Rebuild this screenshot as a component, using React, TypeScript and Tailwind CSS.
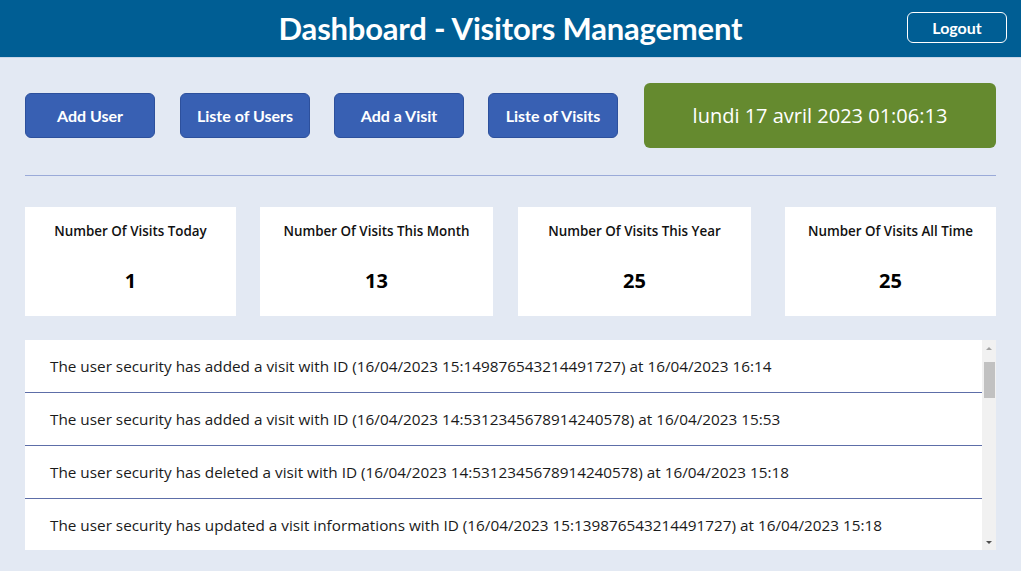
import React from 'react'

const actions = ['Add User', 'Liste of Users', 'Add a Visit', 'Liste of Visits']

const stats = [
  { label: 'Number Of Visits Today', value: 1, w: 'w-[211px]', ml: '' },
  { label: 'Number Of Visits This Month', value: 13, w: 'w-[233px]', ml: 'ml-[24px]' },
  { label: 'Number Of Visits This Year', value: 25, w: 'w-[233px]', ml: 'ml-[25px]' },
  { label: 'Number Of Visits All Time', value: 25, w: 'w-[211px]', ml: 'ml-[34px]' },
]

const logs = [
  'The user security has added a visit with ID (16/04/2023 15:149876543214491727) at 16/04/2023 16:14',
  'The user security has added a visit with ID (16/04/2023 14:5312345678914240578) at 16/04/2023 15:53',
  'The user security has deleted a visit with ID (16/04/2023 14:5312345678914240578) at 16/04/2023 15:18',
  'The user security has updated a visit informations with ID (16/04/2023 15:139876543214491727) at 16/04/2023 15:18',
]

export default function App() {
  return (
    <div className="w-[1021px] h-[571px] overflow-hidden bg-[#e3e9f3] font-['Open_Sans',sans-serif]">
      <header className="relative h-[58px] bg-[#005e94] flex items-center justify-center border-b border-[#c9d6e8]">
        <h1 className="text-white text-[31px] font-bold font-['Lato',sans-serif] leading-none tracking-[-0.2px]">
          Dashboard - Visitors Management
        </h1>
        <button className="absolute right-[14px] top-[12px] w-[100px] h-[31px] rounded-[6px] border border-white text-white text-[16px] font-bold font-['Lato',sans-serif] flex items-center justify-center">
          Logout
        </button>
      </header>

      <main className="px-[25px]">
        <div className="flex items-center mt-[25px] h-[65px]">
          <div className="flex gap-[24px] pr-[1px]">
            {actions.map((a, i) => (
              <button
                key={a}
                className={`w-[130px] h-[45px] rounded-[6px] bg-[#3860b3] border border-[#2d509c] text-white text-[16px] font-bold font-['Lato',sans-serif] flex items-center justify-center ${i === 1 ? 'ml-[1px]' : ''}`}
              >
                {a}
              </button>
            ))}
          </div>
          <div className="ml-[25px] flex-1 h-[65px] rounded-[6px] bg-[#658a2f] text-white text-[20px] flex items-center justify-center">
            lundi 17 avril 2023 01:06:13
          </div>
        </div>

        <div className="mt-[27px] h-[1px] bg-[#9aaad8]" />

        <div className="flex mt-[31px]">
          {stats.map(s => (
            <div key={s.label} className={`${s.w} ${s.ml} h-[109px] bg-white flex flex-col items-center pt-[15px]`}>
              <span className="text-[13.4px] font-semibold text-[#111] leading-[18px]">{s.label}</span>
              <span className="mt-[28px] text-[20px] font-bold text-black leading-[26px]">{s.value}</span>
            </div>
          ))}
        </div>

        <div className="mt-[24px] h-[210px] bg-white flex">
          <div className="flex-1 overflow-hidden">
            {logs.map((l, i) => (
              <div
                key={i}
                className={`h-[53px] flex items-center pl-[25px] text-[15.3px] text-[#1a1a1a] whitespace-nowrap ${i < logs.length - 1 ? 'border-b border-[#5d6ea8]' : ''}`}
              >
                {l}
              </div>
            ))}
          </div>
          <div className="w-[14px] bg-[#f1f1f1] flex flex-col items-center">
            <div className="h-[16px] flex items-center justify-center">
              <div className="w-0 h-0 border-l-[3px] border-r-[3px] border-b-[3px] border-l-transparent border-r-transparent border-b-[#a3a3a3]" />
            </div>
            <div className="w-[11px] h-[36px] bg-[#c1c1c1] mt-[6px]" />
            <div className="flex-1" />
            <div className="h-[16px] flex items-center justify-center">
              <div className="w-0 h-0 border-l-[3px] border-r-[3px] border-t-[3px] border-l-transparent border-r-transparent border-t-[#505050]" />
            </div>
          </div>
        </div>
      </main>
    </div>
  )
}
